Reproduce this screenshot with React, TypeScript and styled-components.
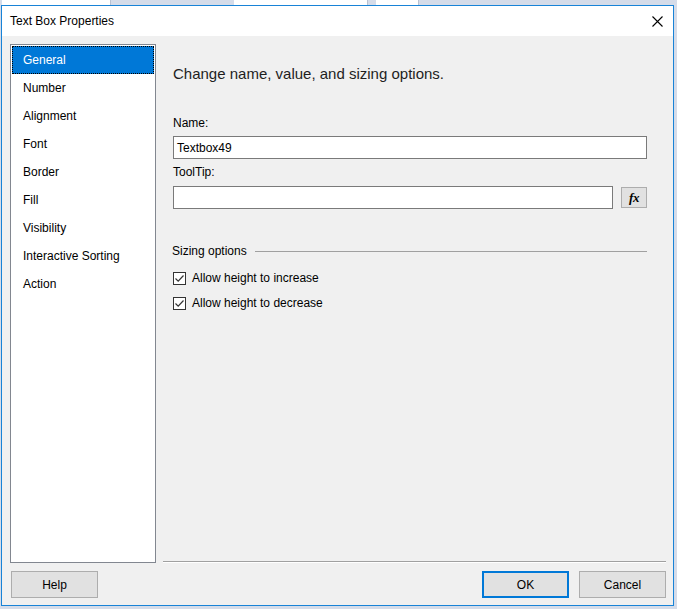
import React from "react";
import styled, { createGlobalStyle } from "styled-components";

const Global = createGlobalStyle`
  html, body { margin: 0; padding: 0; }
  body {
    background: #d5dce9;
    font-family: "Liberation Sans", Arial, sans-serif;
    font-size: 12px;
    color: #000;
  }
`;

const Screen = styled.div`
  width: 677px;
  height: 609px;
  overflow: hidden;
  background: #d5dce9;
  display: flex;
  flex-direction: column;
`;

const TopStrip = styled.div`
  height: 5px;
  display: flex;
  gap: 8px;
  padding-left: 2px;
`;

const StripBox = styled.div<{ $w: number; $ml?: number }>`
  width: ${(p) => p.$w}px;
  margin-left: ${(p) => p.$ml ?? 0}px;
  height: 5px;
  background: #ffffff;
  border-right: 1px solid #b9c2d2;
`;

const Window = styled.div`
  margin-left: 1px;
  width: 671px;
  height: 599px;
  border: 1px solid #1883d7;
  background: #f0f0f0;
  display: flex;
  flex-direction: column;
`;

const TitleBar = styled.div`
  height: 30px;
  background: #ffffff;
  display: flex;
  align-items: center;
  justify-content: space-between;
  padding: 0 10px 0 8px;
`;

const Title = styled.span`
  font-size: 12px;
  line-height: 16px;
`;

const CloseIcon = styled.svg`
  width: 11px;
  height: 11px;
`;

const Body = styled.div`
  flex: 1;
  display: flex;
  padding: 8px 7px 0 8px;
  min-height: 0;
`;

const List = styled.div`
  width: 146px;
  height: 519px;
  border: 1px solid #828790;
  background: #ffffff;
  padding: 1px;
  box-sizing: border-box;
  display: flex;
  flex-direction: column;
`;

const Item = styled.div<{ $selected?: boolean }>`
  height: 28px;
  box-sizing: border-box;
  display: flex;
  align-items: center;
  padding-left: 10px;
  font-size: 12px;
  color: ${(p) => (p.$selected ? "#ffffff" : "#000000")};
  background: ${(p) => (p.$selected ? "#0078d7" : "transparent")};
  border: 1px ${(p) => (p.$selected ? "dotted #000" : "solid transparent")};
`;

const Panel = styled.div`
  flex: 1;
  margin-left: 7px;
  height: 518px;
  box-sizing: border-box;
  border-bottom: 1px solid #a0a0a0;
  box-shadow: 0 1px 0 #ffffff;
  padding: 20px 19px 0 10px;
  display: flex;
  flex-direction: column;
`;

const Heading = styled.div`
  font-size: 15px;
  line-height: 20px;
  color: #1e1e1e;
`;

const FieldLabel = styled.div<{ $mt: number; $mb: number }>`
  font-size: 12px;
  line-height: 16px;
  margin-top: ${(p) => p.$mt}px;
  margin-bottom: ${(p) => p.$mb}px;
`;

const TextInput = styled.div`
  flex: 1;
  height: 23px;
  box-sizing: border-box;
  border: 1px solid #7a7a7a;
  background: #ffffff;
  display: flex;
  align-items: center;
  padding-left: 3px;
  font-size: 12px;
`;

const InputRow = styled.div`
  display: flex;
  align-items: flex-start;
  gap: 8px;
`;

const FxButton = styled.div`
  width: 26px;
  height: 21px;
  margin-top: 1px;
  box-sizing: border-box;
  border: 1px solid #adadad;
  background: #e1e1e1;
  display: flex;
  align-items: center;
  justify-content: center;
  font-family: "Liberation Serif", "Times New Roman", serif;
  font-weight: bold;
  font-style: italic;
  font-size: 13px;
  letter-spacing: -0.5px;
`;

const GroupHeader = styled.div`
  margin-top: 34px;
  display: flex;
  align-items: center;
  gap: 8px;
  height: 16px;
  font-size: 12px;
  margin-left: -1px;
`;

const GroupLine = styled.div`
  flex: 1;
  height: 1px;
  background: #a0a0a0;
`;

const CheckRow = styled.div<{ $mt: number }>`
  margin-top: ${(p) => p.$mt}px;
  display: flex;
  align-items: center;
  gap: 6px;
  height: 16px;
  font-size: 12px;
`;

const CheckBox = styled.div`
  width: 13px;
  height: 13px;
  box-sizing: border-box;
  border: 1px solid #333333;
  background: #ffffff;
  display: flex;
  align-items: center;
  justify-content: center;
`;

const Footer = styled.div`
  height: 41px;
  display: flex;
  align-items: flex-start;
  padding: 7px 7px 0 9px;
  box-sizing: border-box;
`;

const Button = styled.div<{ $primary?: boolean }>`
  width: 87px;
  height: 27px;
  box-sizing: border-box;
  border: ${(p) => (p.$primary ? "2px solid #0078d7" : "1px solid #adadad")};
  background: #e1e1e1;
  display: flex;
  align-items: center;
  justify-content: center;
  font-size: 12px;
`;

const Spacer = styled.div`
  flex: 1;
`;

const ButtonGroup = styled.div`
  display: flex;
  gap: 10px;
`;

const Check = () => (
  <svg width="11" height="11" viewBox="0 0 11 11">
    <path d="M1.5 5.5 L4.2 8.2 L9.5 2.5" fill="none" stroke="#333" strokeWidth="1.2" />
  </svg>
);

const items = [
  "General",
  "Number",
  "Alignment",
  "Font",
  "Border",
  "Fill",
  "Visibility",
  "Interactive Sorting",
  "Action",
];

export default function App() {
  return (
    <>
      <Global />
      <Screen>
        <TopStrip>
          <StripBox $w={108} />
          <StripBox $w={133} $ml={115} />
          <StripBox $w={42} />
        </TopStrip>
        <Window>
          <TitleBar>
            <Title>Text Box Properties</Title>
            <CloseIcon viewBox="0 0 11 11">
              <path d="M0.5 0.5 L10.5 10.5 M10.5 0.5 L0.5 10.5" stroke="#000" strokeWidth="1.1" />
            </CloseIcon>
          </TitleBar>
          <Body>
            <List>
              {items.map((it, i) => (
                <Item key={it} $selected={i === 0}>
                  {it}
                </Item>
              ))}
            </List>
            <Panel>
              <Heading>Change name, value, and sizing options.</Heading>
              <FieldLabel $mt={31} $mb={5}>Name:</FieldLabel>
              <InputRow>
                <TextInput>Textbox49</TextInput>
              </InputRow>
              <FieldLabel $mt={5} $mb={6}>ToolTip:</FieldLabel>
              <InputRow>
                <TextInput />
                <FxButton>fx</FxButton>
              </InputRow>
              <GroupHeader>
                <span>Sizing options</span>
                <GroupLine />
              </GroupHeader>
              <CheckRow $mt={11}>
                <CheckBox>
                  <Check />
                </CheckBox>
                <span>Allow height to increase</span>
              </CheckRow>
              <CheckRow $mt={9}>
                <CheckBox>
                  <Check />
                </CheckBox>
                <span>Allow height to decrease</span>
              </CheckRow>
            </Panel>
          </Body>
          <Footer>
            <Button>Help</Button>
            <Spacer />
            <ButtonGroup>
              <Button $primary>OK</Button>
              <Button>Cancel</Button>
            </ButtonGroup>
          </Footer>
        </Window>
      </Screen>
    </>
  );
}
